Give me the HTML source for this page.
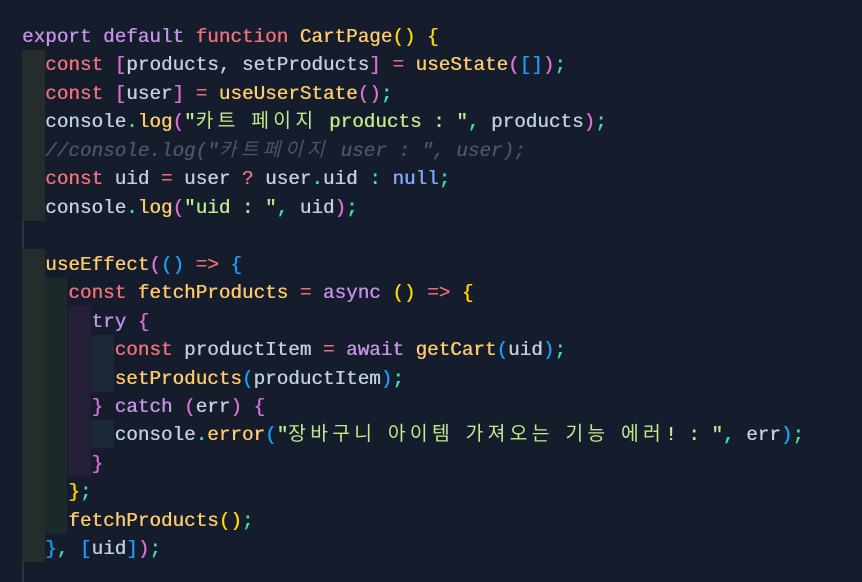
<!DOCTYPE html>
<html><head><meta charset="utf-8"><style>
body{margin:0;width:862px;height:582px;background:#151c2b;overflow:hidden;position:relative}
.b{position:absolute}
.l{position:absolute;left:22px;height:28.45px;line-height:28.45px;white-space:pre;font-family:"Liberation Mono","Noto Sans CJK KR",monospace;font-size:19.3px;color:#c3cee3;text-shadow:0.4px 0 0 currentColor;top:1px}
.k{font-family:"Noto Sans CJK KR","NanumGothic",sans-serif;letter-spacing:4.3px;font-weight:400;line-height:0;text-shadow:none}
.p{color:#c792ea}.r{color:#f07178}.f{color:#ffcb6b}.s{color:#c3e88d}.t{color:#3fdfb0}.c{color:#4b5568;font-style:italic}.n{color:#82aaff}
.y{color:#ffd700}.m{color:#da70d6}.bl{color:#179fff}
</style></head><body>
<div class="b" style="left:22px;top:50px;width:2px;height:532px;background:#2a3242"></div>
<div class="b" style="left:22px;top:50px;width:23px;height:171px;background:#252c2c"></div>
<div class="b" style="left:22px;top:249px;width:23px;height:313px;background:#252c2c"></div>
<div class="b" style="left:45px;top:278px;width:22px;height:256px;background:#1b292b"></div>
<div class="b" style="left:68px;top:306px;width:23px;height:171px;background:#241f36"></div>
<div class="b" style="left:91px;top:335px;width:23px;height:57px;background:#1a2935"></div>
<div class="b" style="left:91px;top:420px;width:23px;height:28px;background:#1a2935"></div>

<div class="l" style="top:23px"><span class="p">export default</span> <span class="r">function</span> <span class="f">CartPage</span><span class="y">()</span> <span class="y">{</span></div>
<div class="l" style="top:51px">  <span class="r">const</span> <span class="m">[</span>products, setProducts<span class="m">]</span> <span class="r">=</span> <span class="f">useState</span><span class="m">(</span><span class="bl">[]</span><span class="m">)</span><span class="t">;</span></div>
<div class="l" style="top:80px">  <span class="r">const</span> <span class="m">[</span>user<span class="m">]</span> <span class="r">=</span> <span class="f">useUserState</span><span class="m">()</span><span class="t">;</span></div>
<div class="l" style="top:108px">  console<span class="t">.</span><span class="f">log</span><span class="m">(</span><span class="s">"<span class="k">카트</span> <span class="k">페이지</span> products : "</span><span class="t">,</span> products<span class="m">)</span><span class="t">;</span></div>
<div class="l c" style="top:137px">  //console.log("<span class="k">카트페이지</span> user : ", user);</div>
<div class="l" style="top:165px">  <span class="r">const</span> uid <span class="r">=</span> user <span class="r">?</span> user<span class="t">.</span>uid <span class="t">:</span> <span class="n">null</span><span class="t">;</span></div>
<div class="l" style="top:194px">  console<span class="t">.</span><span class="f">log</span><span class="m">(</span><span class="s">"uid : "</span><span class="t">,</span> uid<span class="m">)</span><span class="t">;</span></div>
<div class="l" style="top:251px">  <span class="f">useEffect</span><span class="m">(</span><span class="bl">()</span> <span class="r">=&gt;</span> <span class="bl">{</span></div>
<div class="l" style="top:279px">    <span class="r">const</span> <span class="f">fetchProducts</span> <span class="r">=</span> <span class="p">async</span> <span class="y">()</span> <span class="r">=&gt;</span> <span class="y">{</span></div>
<div class="l" style="top:308px">      <span class="p">try</span> <span class="m">{</span></div>
<div class="l" style="top:336px">        <span class="r">const</span> productItem <span class="r">=</span> <span class="p">await</span> <span class="f">getCart</span><span class="bl">(</span>uid<span class="bl">)</span><span class="t">;</span></div>
<div class="l" style="top:365px">        <span class="f">setProducts</span><span class="bl">(</span>productItem<span class="bl">)</span><span class="t">;</span></div>
<div class="l" style="top:393px">      <span class="m">}</span> <span class="p">catch</span> <span class="m">(</span>err<span class="m">)</span> <span class="m">{</span></div>
<div class="l" style="top:421px">        console<span class="t">.</span><span class="f">error</span><span class="bl">(</span><span class="s">"<span class="k">장바구니</span> <span class="k">아이템</span> <span class="k">가져오는</span> <span class="k">기능</span> <span class="k">에러</span>! : "</span><span class="t">,</span> err<span class="bl">)</span><span class="t">;</span></div>
<div class="l" style="top:450px">      <span class="m">}</span></div>
<div class="l" style="top:478px">    <span class="y">}</span><span class="t">;</span></div>
<div class="l" style="top:507px">    <span class="f">fetchProducts</span><span class="y">()</span><span class="t">;</span></div>
<div class="l" style="top:535px">  <span class="bl">}</span><span class="t">,</span> <span class="bl">[</span>uid<span class="bl">]</span><span class="m">)</span><span class="t">;</span></div>
</body></html>
